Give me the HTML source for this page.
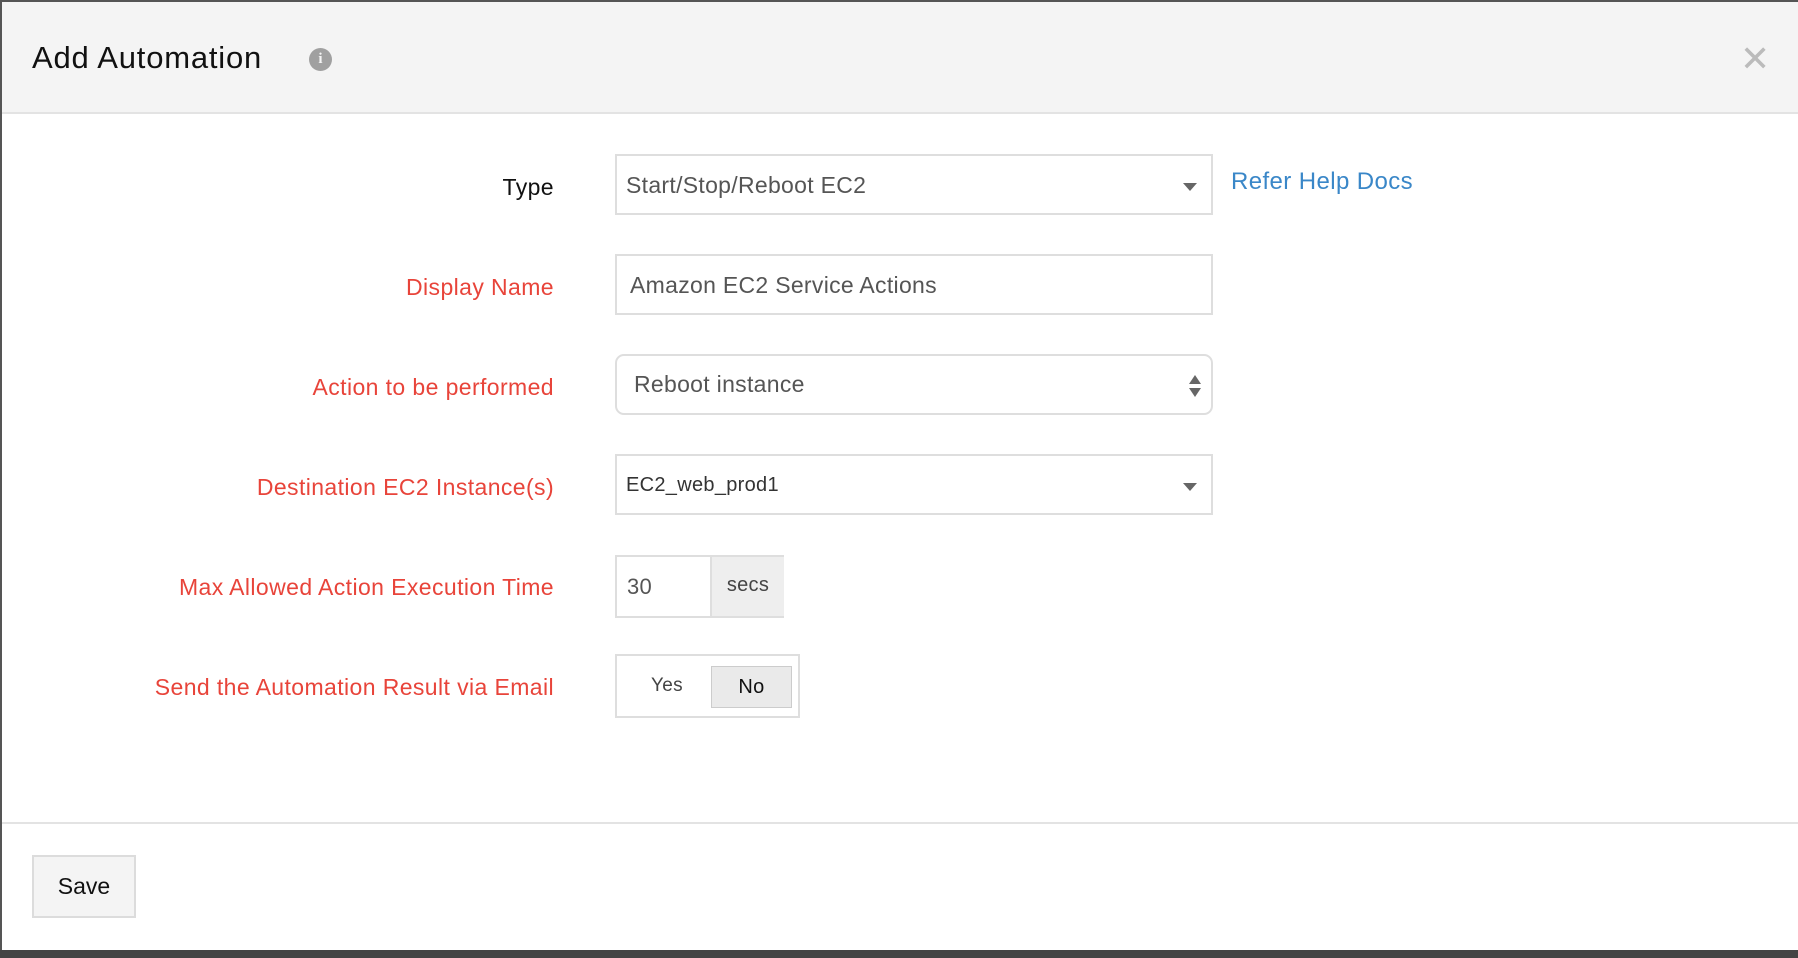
<!DOCTYPE html>
<html><head><meta charset="utf-8"><style>
html,body{margin:0;padding:0;width:1798px;height:958px;overflow:hidden;background:#fff;font-family:"Liberation Sans",sans-serif}
.frame{position:absolute;left:0;top:0;width:1798px;height:958px;border-top:2px solid #555;border-left:2px solid #555;box-sizing:border-box}
.bottom{position:absolute;left:0;top:950px;width:1798px;height:8px;background:#444}
.header{position:absolute;left:2px;top:2px;width:1796px;height:110px;background:#f4f4f4;border-bottom:2px solid #e3e3e3}
.title{position:absolute;left:30px;top:38px;font-size:31px;color:#111;letter-spacing:0.8px}
.info{position:absolute;left:307px;top:46px;width:23px;height:23px;border-radius:50%;background:#a0a0a0;color:#f4f4f4;font:bold 15px "Liberation Serif",serif;text-align:center;line-height:23px}
.close{position:absolute;left:1738px;top:36px;font-size:36px;color:#bbb}
.lbl{position:absolute;right:1244px;font-size:23px;color:#e8443a;letter-spacing:0.4px;white-space:nowrap}
.box{position:absolute;left:615px;width:598px;height:61px;border:2px solid #dedede;box-sizing:border-box;font-size:23px;color:#555;letter-spacing:0.3px}
.box span{position:absolute;top:16px}
.tri{position:absolute;right:14px;top:27px;width:0;height:0;border-left:7px solid transparent;border-right:7px solid transparent;border-top:8px solid #666}
.link{position:absolute;left:1231px;top:168px;font-size:24px;color:#3a87c8;letter-spacing:0.4px}
.sep{position:absolute;left:2px;top:822px;width:1796px;height:2px;background:#e3e3e3}
.save{position:absolute;left:32px;top:855px;width:104px;height:63px;border:2px solid #dcdcdc;background:#f4f4f4;box-sizing:border-box;font-size:23px;color:#111;text-align:center;line-height:59px}
</style></head><body>
<div class="frame"></div>
<div class="header"><div class="title">Add Automation</div><div class="info">i</div><div class="close">✕</div></div>

<div class="lbl" style="top:174px;color:#111">Type</div>
<div class="box" style="top:154px"><span style="left:9px">Start/Stop/Reboot EC2</span><div class="tri"></div></div>
<div class="link">Refer Help Docs</div>

<div class="lbl" style="top:274px">Display Name</div>
<div class="box" style="top:254px"><span style="left:13px">Amazon EC2 Service Actions</span></div>

<div class="lbl" style="top:374px">Action to be performed</div>
<div class="box" style="top:354px;border-radius:9px"><span style="left:17px;top:15px">Reboot instance</span>
<div style="position:absolute;right:10px;top:19px;width:0;height:0;border-left:6px solid transparent;border-right:6px solid transparent;border-bottom:9px solid #666"></div>
<div style="position:absolute;right:10px;top:32px;width:0;height:0;border-left:6px solid transparent;border-right:6px solid transparent;border-top:9px solid #666"></div></div>

<div class="lbl" style="top:474px">Destination EC2 Instance(s)</div>
<div class="box" style="top:454px;font-size:20px;color:#333"><span style="left:9px;top:18px">EC2_web_prod1</span><div class="tri"></div></div>

<div class="lbl" style="top:574px">Max Allowed Action Execution Time</div>
<div class="box" style="top:555px;width:169px;height:63px"><span style="left:10px;top:17px;font-size:22px">30</span>
<div style="position:absolute;left:93px;top:0;width:72px;height:59px;background:#eee;border-left:2px solid #dedede;font-size:20px;color:#444;text-align:center;line-height:56px">secs</div></div>

<div class="lbl" style="top:674px">Send the Automation Result via Email</div>
<div class="box" style="top:654px;width:185px;height:64px"><span style="left:34px;top:19px;font-size:19px;color:#444">Yes</span>
<div style="position:absolute;left:94px;top:10px;width:81px;height:42px;background:#eaeaea;border:1px solid #ccc;box-sizing:border-box;font-size:20px;color:#111;text-align:center;line-height:40px">No</div></div>

<div class="sep"></div>
<div class="save">Save</div>
<div class="bottom"></div>
</body></html>
